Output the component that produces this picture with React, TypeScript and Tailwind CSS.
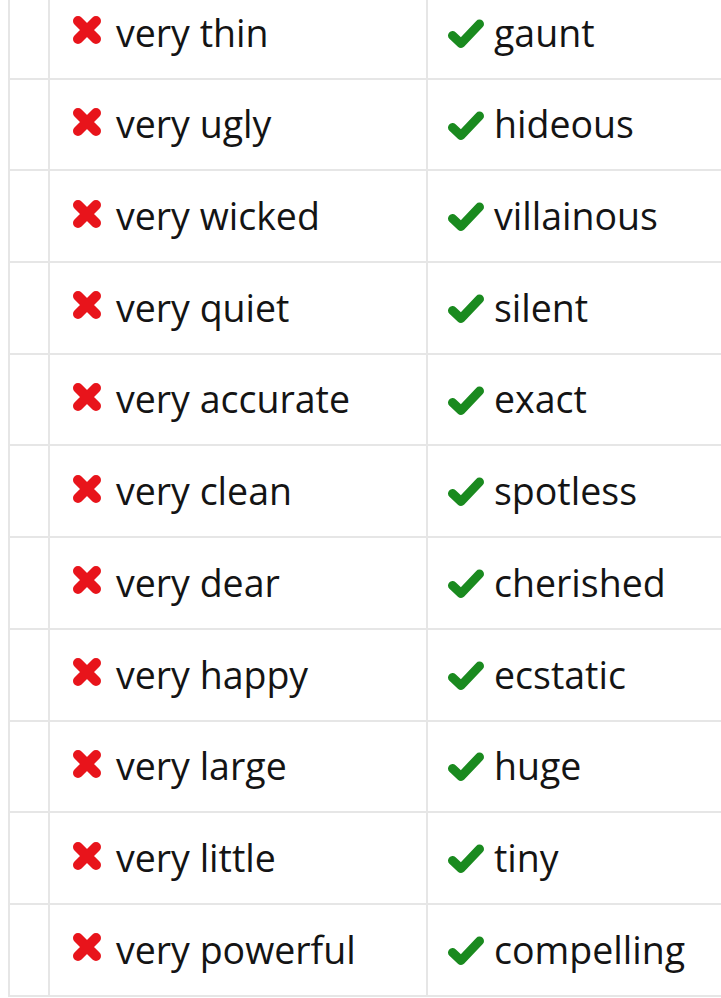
const rows = [
  ["very thin", "gaunt"],
  ["very ugly", "hideous"],
  ["very wicked", "villainous"],
  ["very quiet", "silent"],
  ["very accurate", "exact"],
  ["very clean", "spotless"],
  ["very dear", "cherished"],
  ["very happy", "ecstatic"],
  ["very large", "huge"],
  ["very little", "tiny"],
  ["very powerful", "compelling"],
];

function CrossIcon() {
  return (
    <svg viewBox="0 0 32 32" className="mb-[5px] h-[32px] w-[32px] shrink-0" aria-hidden>
      <path
        d="M7 7L25 25M25 7L7 25"
        fill="none"
        stroke="#e8141b"
        strokeWidth="10"
        strokeLinecap="round"
      />
    </svg>
  );
}

function CheckIcon() {
  return (
    <svg viewBox="0 0 38 32" className="h-[32px] w-[38px] shrink-0" aria-hidden>
      <path
        d="M5.5 18.5L14 26.5L32.5 7"
        fill="none"
        stroke="#1a8a1f"
        strokeWidth="9"
        strokeLinecap="round"
        strokeLinejoin="round"
      />
    </svg>
  );
}

export default function App() {
  return (
    <div className="h-[998px] overflow-hidden bg-white font-['Open_Sans',sans-serif] text-[37.5px] text-[#141414]">
      <div className="ml-2 -mt-[12px] border-l-2 border-[#e6e6e6]">
        {rows.map(([bad, good]) => (
          <div
            key={bad}
            className="grid h-[91.7px] grid-cols-[40px_378px_1fr] border-b-2 border-[#e6e6e6]"
          >
            <div className="border-r-2 border-[#e6e6e6]" />
            <div className="flex items-center gap-[13px] border-r-2 border-[#e6e6e6] pl-[21px]">
              <CrossIcon />
              <span>{bad}</span>
            </div>
            <div className="flex items-center gap-[9px] pl-[19px]">
              <CheckIcon />
              <span>{good}</span>
            </div>
          </div>
        ))}
      </div>
    </div>
  );
}
